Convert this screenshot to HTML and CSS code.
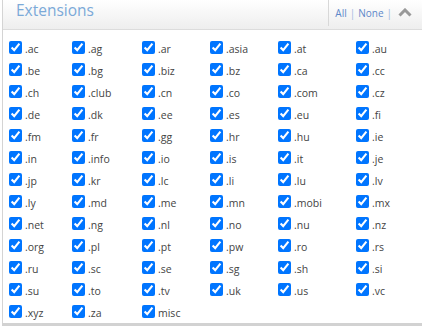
FILE: index.html
```html
<!DOCTYPE html>
<html lang="en">
<head>
    <meta charset="UTF-8">
    <meta name="viewport" content="width=device-width, initial-scale=1.0">
    <title>Extensions</title>
    <link rel="stylesheet" href="styles.css">
</head>
<body>
    <div class="panel">
        <div class="panel-head">
            <h2>Extensions</h2>
            <div class="tools">
                <a href="#">All</a>
                <span class="sep">|</span>
                <a href="#">None</a>
                <span class="sep">|</span>
                <svg class="chevron" width="14" height="9" viewBox="0 0 14 9">
                    <path d="M1.5 7.5 L7 2 L12.5 7.5" fill="none" stroke="#999" stroke-width="3"/>
                </svg>
            </div>
        </div>
        <div class="ext-list" id="extList"></div>
    </div>

    <script>
        const exts = [
            ".ac", ".ag", ".ar", ".asia", ".at", ".au",
            ".be", ".bg", ".biz", ".bz", ".ca", ".cc",
            ".ch", ".club", ".cn", ".co", ".com", ".cz",
            ".de", ".dk", ".ee", ".es", ".eu", ".fi",
            ".fm", ".fr", ".gg", ".hr", ".hu", ".ie",
            ".in", ".info", ".io", ".is", ".it", ".je",
            ".jp", ".kr", ".lc", ".li", ".lu", ".lv",
            ".ly", ".md", ".me", ".mn", ".mobi", ".mx",
            ".net", ".ng", ".nl", ".no", ".nu", ".nz",
            ".org", ".pl", ".pt", ".pw", ".ro", ".rs",
            ".ru", ".sc", ".se", ".sg", ".sh", ".si",
            ".su", ".to", ".tv", ".uk", ".us", ".vc",
            ".xyz", ".za", "misc"
        ];
        const list = document.getElementById("extList");
        exts.forEach(function(name) {
            const label = document.createElement("label");
            label.className = "ext";
            const box = document.createElement("input");
            box.type = "checkbox";
            box.checked = true;
            const text = document.createElement("span");
            text.textContent = name;
            label.appendChild(box);
            label.appendChild(text);
            list.appendChild(label);
        });
    </script>
</body>
</html>
```

FILE: styles.css
```css
body {
    margin: 0;
    padding: 0;
    background-color: #fff;
    font-family: "Open Sans", Arial, sans-serif;
}
.panel {
    margin-left: 2px;
    border-left: 1px solid #d4d4d4;
    border-bottom: 3px solid #d2d2d2;
}
.panel-head {
    display: flex;
    justify-content: space-between;
    height: 29px;
    background: linear-gradient(#ffffff, #eeeeee);
    border-bottom: 1px solid #dcdcdc;
}
h2 {
    margin: 0;
    padding: 0 0 0 13px;
    font-size: 15.5px;
    font-weight: normal;
    line-height: 20px;
    color: #7ba9d8;
}
.tools {
    display: flex;
    align-items: center;
    height: 25px;
    padding: 0 10px 1px 6px;
    border-left: 1px solid #d8d8d8;
    font-size: 10px;
}
.tools a {
    color: #5d87c9;
    text-decoration: none;
}
.sep {
    color: #9cb7df;
    margin: 0 3px;
}
.chevron {
    margin-left: 3px;
}
.ext-list {
    display: grid;
    grid-template-columns: 63px 70px 68px 68px 78px auto;
    grid-auto-rows: 22px;
    padding: 6px 0 1px 6px;
}
.ext {
    display: flex;
    align-items: center;
    font-size: 10.5px;
    color: #444;
}
.ext input {
    margin: 0 3px 0 0;
    width: 13px;
    height: 13px;
}
.ext span {
    padding-top: 3px;
}
```
